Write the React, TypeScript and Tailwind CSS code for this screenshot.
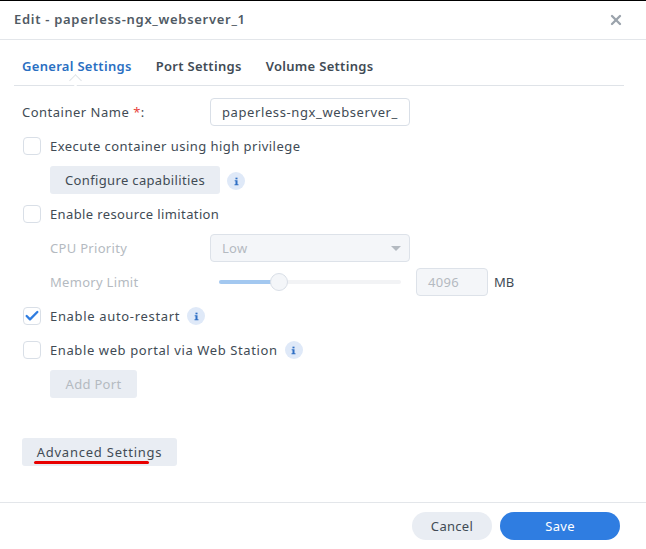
import { Check, X } from 'lucide-react';

const InfoDot = ({ className = '' }: { className?: string }) => (
  <span className={`flex h-[18px] w-[18px] shrink-0 items-center justify-center rounded-full bg-[#dfe9f8] ${className}`}>
    <svg width="5" height="9" viewBox="0 0 6 10" fill="#2f6fc4">
      <rect x="1.8" y="0.4" width="2.4" height="2" />
      <path d="M0.8 3.6H4.2V8.4H5.4V9.6H0.6V8.4H1.8V4.8H0.8Z" />
    </svg>
  </span>
);

const CheckRow = ({ label, checked, info, spacing }: { label: string; checked?: boolean; info?: boolean; spacing: string }) => (
  <div className="flex h-7 items-center pl-px">
    <span className="flex h-[18px] w-[18px] items-center justify-center rounded-[4px] border border-[#d9dfe7] bg-white">
      {checked && <Check size={16} strokeWidth={3.5} className="text-[#2f7de1]" />}
    </span>
    <span className={`ml-[9px] pt-px ${spacing}`}>{label}</span>
    {info && <InfoDot className="ml-[7px]" />}
  </div>
);

export default function App() {
  return (
    <div className="h-[549px] w-[646px] overflow-hidden border-t border-black bg-white font-['Noto_Sans','Open_Sans',sans-serif] text-[13px] tracking-[0.3px] text-[#414b55]">
      <div className="flex h-[39px] items-center justify-between border-b border-[#e3e6ea] pl-[14px] pr-[22px]">
        <span className="font-semibold tracking-[0.7px] text-[#505a64]">Edit - paperless-ngx_webserver_1</span>
        <X size={16} strokeWidth={3.5} className="text-[#9ba3ac]" />
      </div>

      <div className="relative mx-[14px] mt-4 flex h-[30px] w-[610px] gap-6 border-b border-[#dfe3e8] pl-2 pt-px font-semibold">
        <span className="text-[#2a6fc2]">General Settings</span>
        <span>Port Settings</span>
        <span>Volume Settings</span>
        <span className="absolute -bottom-[1px] left-[57px] h-[9px] w-[9px] translate-y-[-1px] rotate-45 border-l border-t border-[#dfe3e8] bg-white" />
      </div>

      <div className="mt-3 flex flex-col gap-[6px] pl-[22px]">
        <div className="flex h-7 items-center">
          <span className="w-[188px] pt-px tracking-[0.5px]">
            Container Name <span className="text-[#e8413c]">*</span>:
          </span>
          <span className="flex h-7 w-[200px] items-center overflow-hidden rounded-[4px] border border-[#d9dfe7] pl-[11px] pt-px whitespace-nowrap tracking-[0.6px]">
            paperless-ngx_webserver_
          </span>
        </div>

        <CheckRow label="Execute container using high privilege" spacing="tracking-[0.46px]" />

        <div className="flex h-7 items-center pl-7">
          <span className="flex h-7 w-[170px] items-center justify-center rounded-[3px] bg-[#e9edf3] pt-px tracking-[0.35px]">Configure capabilities</span>
          <InfoDot className="mt-[2px] ml-[7px]" />
        </div>

        <CheckRow label="Enable resource limitation" spacing="tracking-[0.38px]" />

        <div className="flex h-7 items-center pl-7 text-[#b4bac1]">
          <span className="w-[160px] pt-px">CPU Priority</span>
          <span className="flex h-7 w-[200px] items-center justify-between rounded-[4px] border border-[#dde2e9] bg-[#f4f6f9] pl-[11px] pr-[8px] pt-px">
            Low
            <span className="h-0 w-0 border-x-[5px] border-t-[5px] border-x-transparent border-t-[#b4bac1]" />
          </span>
        </div>

        <div className="flex h-7 items-center pl-7 text-[#b4bac1]">
          <span className="w-[169px] pt-px">Memory Limit</span>
          <span className="relative flex h-[4px] w-[182px] items-center rounded-full bg-[#f2f3f5]">
            <span className="h-[4px] w-[56px] rounded-full bg-[#a3c8f0]" />
            <span className="absolute left-[51px] h-[18px] w-[18px] rounded-full border border-[#d9dfe7] bg-[#f4f6f9]" />
          </span>
          <span className="ml-[15px] flex h-7 w-[72px] items-center rounded-[4px] border border-[#dde2e9] bg-[#f4f6f9] pl-[11px] pt-px">4096</span>
          <span className="ml-[6px] pt-px tracking-normal text-[#414b55]">MB</span>
        </div>

        <CheckRow label="Enable auto-restart" checked info spacing="tracking-[0.67px]" />
        <CheckRow label="Enable web portal via Web Station" info spacing="tracking-[0.6px]" />

        <div className="flex h-7 items-center pl-7">
          <span className="flex h-7 w-[87px] items-center justify-center rounded-[3px] bg-[#e9edf3] pt-px text-[#b4bac1]">Add Port</span>
        </div>
      </div>

      <div className="relative mt-10 ml-[22px] flex h-7 w-[155px] items-center justify-center rounded-[3px] bg-[#e9edf3] pt-px tracking-[0.77px]">
        Advanced Settings
        <span className="absolute bottom-[2px] left-3 h-[3px] w-[115px] rounded-full bg-[#e80000]" />
      </div>

      <div className="mt-9 flex h-[47px] justify-end gap-2 border-t border-[#e3e6ea] pt-[9px] pr-[26px]">
        <span className="flex h-7 w-20 items-center justify-center rounded-full bg-[#e9edf3] pt-px">Cancel</span>
        <span className="flex h-7 w-[120px] items-center justify-center rounded-full bg-[#2f7de1] pt-px text-white">Save</span>
      </div>
    </div>
  );
}
